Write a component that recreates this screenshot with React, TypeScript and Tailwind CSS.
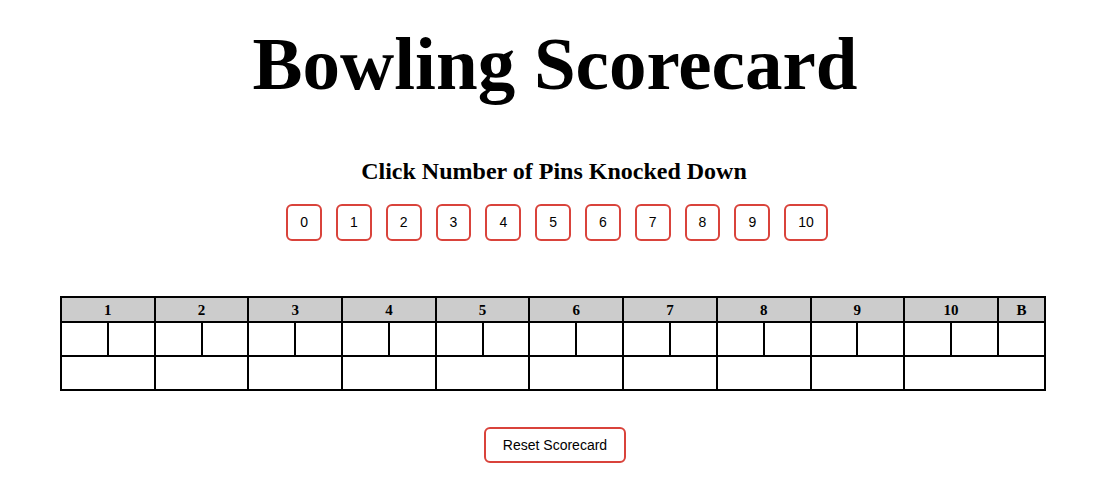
import { useState } from 'react';

const pins = [0, 1, 2, 3, 4, 5, 6, 7, 8, 9, 10];
const frames = [1, 2, 3, 4, 5, 6, 7, 8, 9, 10];

export default function App() {
  const [rolls, setRolls] = useState<number[]>([]);

  return (
    <div className="flex flex-col items-center bg-white text-black font-['Liberation_Serif',serif]">
      <h1 className="mt-[22px] ml-[2px] text-[75px] leading-[84px] font-bold">
        Bowling Scorecard
      </h1>

      <h2 className="mt-[51px] text-[24px] leading-[28px] font-bold">
        Click Number of Pins Knocked Down
      </h2>

      <div className="mt-[19px] ml-[6px] flex gap-[14px]">
        {pins.map((p) => (
          <button
            key={p}
            onClick={() => setRolls((prev) => [...prev, p])}
            className="h-[37px] px-[12px] rounded-[6px] border-2 border-[#d9433b] bg-white text-[14px] font-['Liberation_Sans',Arial,sans-serif]"
          >
            {p}
          </button>
        ))}
      </div>

      <table className="mt-[55px] mr-[2px] w-[986px] table-fixed border-collapse border-2 border-black">
        <thead>
          <tr className="h-[25px] bg-[#cccccc]">
            {frames.map((f) => (
              <th
                key={f}
                colSpan={2}
                className="border-2 border-black text-[15px] font-bold leading-[18px] p-0"
              >
                {f}
              </th>
            ))}
            <th className="border-2 border-black text-[15px] font-bold leading-[18px] p-0">
              B
            </th>
          </tr>
        </thead>
        <tbody>
          <tr className="h-[34px]">
            {Array.from({ length: 21 }).map((_, i) => (
              <td key={i} className="border-2 border-black text-center text-[15px]">
                {rolls[i] ?? ''}
              </td>
            ))}
          </tr>
          <tr className="h-[34px]">
            {frames.map((f) => (
              <td
                key={f}
                colSpan={f === 10 ? 3 : 2}
                className="border-2 border-black"
              />
            ))}
          </tr>
        </tbody>
      </table>

      <button
        onClick={() => setRolls([])}
        className="mt-[36px] ml-[2px] h-[36px] px-[17px] rounded-[6px] border-2 border-[#d9433b] bg-white text-[14px] font-['Liberation_Sans',Arial,sans-serif]"
      >
        Reset Scorecard
      </button>
    </div>
  );
}
